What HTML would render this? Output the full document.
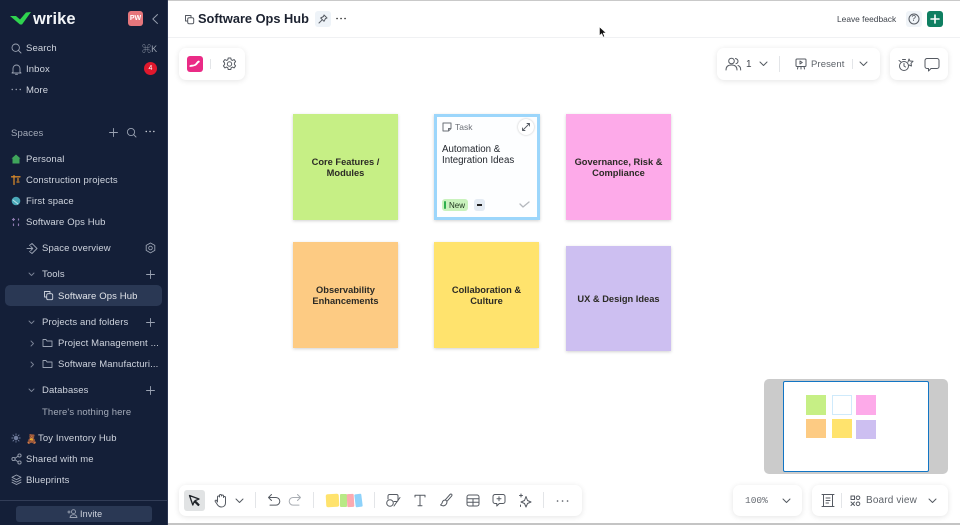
<!DOCTYPE html>
<html><head><meta charset="utf-8"><style>
html{background:#fff}
html,body{margin:0;padding:0;width:960px;height:525px;overflow:hidden;font-family:"Liberation Sans","Noto Sans CJK SC",sans-serif}
body{background:#fff;filter:blur(.3px)}
.a{position:absolute}
.t{position:absolute;white-space:nowrap;line-height:14px}
#side{position:absolute;left:0;top:0;width:168px;height:525px;background:#141f38}
#side .t{color:#cfd4de;font-size:9.5px;letter-spacing:.12px;transform:translateY(1px)}
#side svg,.ic{position:absolute;fill:none;stroke-linecap:round;stroke-linejoin:round}
#side svg{stroke:#9aa2b2;stroke-width:.9}
#side svg.ch{stroke:#7a8396}
.ic{stroke:#555a62;stroke-width:1}
.card{position:absolute;background:#fff;border-radius:7px;box-shadow:0 1px 6px rgba(0,0,0,.11)}
.note{position:absolute;box-shadow:0 1px 3px rgba(0,0,0,.18);display:flex;align-items:center;justify-content:center;text-align:center;font-weight:700;font-size:9.3px;line-height:11.5px;color:#2b2a25;width:105px;height:105px;box-sizing:border-box;padding-top:2px}
.dv{position:absolute;width:1px;background:#e3e5e8}
</style></head><body>
<div class="a" style="left:0;top:0;width:960px;height:1px;background:#c9c9c9"></div>
<div class="a" style="left:0;top:523px;width:960px;height:2px;background:#c4c4c4"></div>
<div class="a" style="left:168px;top:37px;width:792px;height:1px;background:#f0f1f3"></div>

<div id="side">
<svg style="left:10px;top:11px;stroke:none" width="22" height="14" viewBox="0 0 22 14"><path style="fill:#2fd34f;stroke:none" d="M0 5h6l4 3.500 6-7 5-.5-9 12.500h-2z"/></svg>
<div class="t" style="left:33px;top:9px;font-size:16.500px;font-weight:700;color:#f2f4f7;letter-spacing:.1px;line-height:18px">wrike</div>
<div class="a" style="left:128px;top:11px;width:15px;height:15px;background:#e5767c;border-radius:3px;color:#fff;font-size:7px;font-weight:700;text-align:center;line-height:15px">PW</div>
<svg style="left:151px;top:13px" width="8" height="12"><path d="M6.500 1.500 1.800 6l4.700 4.500"/></svg>

<svg style="left:11px;top:43px" width="11" height="11"><circle cx="4.700" cy="4.700" r="3.700"/><path d="M7.500 7.500 10 10"/></svg>
<div class="t" style="left:26px;top:41px">Search</div>
<div class="t" style="left:142px;top:41px;color:#9aa2b1;font-size:9px">⌘K</div>
<svg style="left:11px;top:64px" width="11" height="11"><path d="M2 8V4.500a3.500 3.500 0 0 1 7 0V8l1 1H1zM4.500 10.300h2"/></svg>
<div class="t" style="left:26px;top:62px">Inbox</div>
<div class="a" style="left:144px;top:62px;width:13px;height:13px;border-radius:50%;background:#e0182d;color:#fff;font-size:7px;line-height:13px;text-align:center">4</div>
<svg style="left:11px;top:88px;stroke-width:1.400" width="11" height="4"><path d="M1.200 1.500h.1M5.200 1.500h.1M9.200 1.500h.1"/></svg>
<div class="t" style="left:26px;top:83px">More</div>

<div class="t" style="left:11px;top:126px;color:#a4abb9">Spaces</div>
<svg style="left:108px;top:127px" width="11" height="11"><path d="M5.500 1.500v8M1.500 5.500h8"/></svg>
<svg style="left:126px;top:127px" width="11" height="11"><circle cx="5" cy="5" r="3.600"/><path d="M7.700 7.700 10 10"/></svg>
<svg style="left:145px;top:130px;stroke-width:1.400;stroke:#d5d9e0" width="11" height="4"><path d="M1.200 1.500h.1M5 1.500h.1M8.800 1.500h.1"/></svg>

<svg style="left:11px;top:154px;stroke:none" width="10" height="10"><path style="fill:#3fa55b;stroke:none" d="M5 .5 9.500 4.500H8.500V9.500h-7V4.500H.5z"/></svg>
<div class="t" style="left:26px;top:152px">Personal</div>
<svg style="left:11px;top:175px;stroke:#d4862a;stroke-width:1.300" width="10" height="10"><path d="M3 .5v9M.5 1.800h8.500M7 3.500v2M6 7h2"/></svg>
<div class="t" style="left:26px;top:173px">Construction projects</div>
<svg style="left:11px;top:196px;stroke:none" width="10" height="10"><circle cx="5" cy="5" r="4.300" style="fill:#4aa8b8;stroke:none"/><path d="M2 4l5 4" style="stroke:#bfe3e8"/></svg>
<div class="t" style="left:26px;top:194px">First space</div>
<svg style="left:11px;top:217px;stroke:#8d7ab0;stroke-width:1.200" width="10" height="10"><path d="M2.500 1.500v2M1.500 2.500h2M7.500 2v1M7.500 7v1.500M2.500 7v1.500"/></svg>
<div class="t" style="left:26px;top:215px">Software Ops Hub</div>

<svg style="left:26px;top:243px" width="12" height="11"><path d="M1 5.500h5.500M4.800 3.500l2 2-2 2M3.500 2.500l2.500-2 5 5-5 5-2.500-2"/></svg>
<div class="t" style="left:42px;top:241px">Space overview</div>
<svg style="left:145px;top:242px" width="11" height="12"><path d="M5.500 1 9.800 3.400v5L5.500 10.900 1.200 8.400v-5z"/><circle cx="5.500" cy="6" r="1.800"/></svg>

<svg class="ch" style="left:28px;top:272px" width="7" height="5"><path d="M1 1 3.500 3.500 6 1"/></svg>
<div class="t" style="left:42px;top:267px">Tools</div>
<svg style="left:145px;top:269px" width="11" height="11"><path d="M5.500 1.500v8M1.500 5.500h8"/></svg>
<div class="a" style="left:5px;top:285px;width:157px;height:21px;background:#2a3854;border-radius:5px"></div>
<svg style="left:43px;top:290px;stroke:#cfd4de" width="11" height="11"><path d="M3.500 7H1.500V1.500H7V3.500"/><rect x="3.700" y="3.700" width="6" height="6" rx="1.500"/></svg>
<div class="t" style="left:58px;top:289px;color:#e2e5ea">Software Ops Hub</div>

<svg class="ch" style="left:28px;top:320px" width="7" height="5"><path d="M1 1 3.500 3.500 6 1"/></svg>
<div class="t" style="left:42px;top:315px">Projects and folders</div>
<svg style="left:145px;top:317px" width="11" height="11"><path d="M5.500 1.500v8M1.500 5.500h8"/></svg>
<svg class="ch" style="left:30px;top:340px" width="5" height="7"><path d="M1 1 3.500 3.500 1 6"/></svg>
<svg style="left:42px;top:338px" width="11" height="10"><path d="M1 2v6.500h9V3H5L4 1.500H1z"/></svg>
<div class="t" style="left:58px;top:336px">Project Management ...</div>
<svg class="ch" style="left:30px;top:361px" width="5" height="7"><path d="M1 1 3.500 3.500 1 6"/></svg>
<svg style="left:42px;top:359px" width="11" height="10"><path d="M1 2v6.500h9V3H5L4 1.500H1z"/></svg>
<div class="t" style="left:58px;top:357px">Software Manufacturi...</div>

<svg class="ch" style="left:28px;top:388px" width="7" height="5"><path d="M1 1 3.500 3.500 6 1"/></svg>
<div class="t" style="left:42px;top:383px">Databases</div>
<svg style="left:145px;top:385px" width="11" height="11"><path d="M5.500 1.500v8M1.500 5.500h8"/></svg>
<div class="t" style="left:42px;top:405px;color:#a4abb9">There's nothing here</div>

<svg style="left:11px;top:433px;stroke:#6f7c9c" width="10" height="10"><circle cx="5" cy="5" r="1.800" style="fill:#6f7c9c"/><path d="M5 .8v1M5 8.200v1M.8 5h1M8.200 5h1M2 2l.7.700M7.300 7.300l.7.700M2 8l.7-.7M7.300 2.700 8 2"/></svg>
<div class="t" style="left:26px;top:431px;font-size:9px;line-height:14px">🧸</div>
<div class="t" style="left:38px;top:431px">Toy Inventory Hub</div>
<svg style="left:11px;top:453px" width="11" height="12"><circle cx="2.500" cy="6" r="1.600"/><circle cx="8.500" cy="2.500" r="1.600"/><circle cx="8.500" cy="9.500" r="1.600"/><path d="M4 5.200 7 3.300M4 6.800l3 1.900"/></svg>
<div class="t" style="left:26px;top:452px">Shared with me</div>
<svg style="left:11px;top:474px" width="11" height="12"><path d="M5.500 1 10 3.300 5.500 5.600 1 3.300zM1 5.800l4.500 2.300L10 5.800M1 8.200l4.500 2.300L10 8.200"/></svg>
<div class="t" style="left:26px;top:473px">Blueprints</div>
<div class="a" style="left:0;top:500px;width:168px;height:1px;background:#323d57"></div>
<div class="a" style="left:16px;top:506px;width:136px;height:16px;background:#2a3854;border-radius:3px"></div>
<svg style="left:67px;top:508px" width="11" height="11"><circle cx="6.500" cy="3.700" r="2"/><path d="M3 9.500c.4-2 1.700-2.800 3.500-2.800s3.100.8 3.500 2.800zM.8 4h2.400M2 2.800v2.400"/></svg>
<div class="t" style="left:80px;top:506px;font-size:9px">Invite</div>
</div>
<div class="a" style="left:167px;top:0;width:1px;height:525px;background:#2a3450"></div>

<!-- header -->
<svg class="ic" style="left:184px;top:14px" width="11" height="11"><path d="M3.500 7H1.500V1.500H7V3.500"/><rect x="3.700" y="3.700" width="6" height="6" rx="1.500"/></svg>
<div class="t" style="left:198px;top:11px;font-size:12.800px;font-weight:700;color:#1c2230;line-height:16px">Software Ops Hub</div>
<div class="a" style="left:315px;top:11px;width:16px;height:16px;background:#eef3f8;border-radius:3px"></div>
<svg class="ic" style="left:318px;top:14px" width="10" height="10"><path d="M1 9 3.700 6.300M6 1 9 4 7.500 4.500 6 7.300 2.700 4 5.500 2.500z"/></svg>
<svg class="ic" style="left:336px;top:17px;stroke-width:1.500;stroke:#222" width="10" height="4"><path d="M1 1.500h.1M5 1.500h.1M9 1.500h.1"/></svg>
<div class="t" style="left:837px;top:12px;font-size:8.400px;color:#3f444c">Leave feedback</div>
<div class="a" style="left:906px;top:11px;width:16px;height:16px;background:#f0f4f8;border-radius:3px"></div>
<svg class="ic" style="left:908px;top:13px" width="12" height="12"><circle cx="6" cy="6" r="5"/></svg>
<div class="t" style="left:911.500px;top:12px;font-size:8px;color:#3f444c">?</div>
<div class="a" style="left:927px;top:11px;width:16px;height:16px;background:#0f7f61;border-radius:3px"></div>
<svg class="ic" style="left:930px;top:14px;stroke:#fff;stroke-width:1.600" width="10" height="10"><path d="M5 1v8M1 5h8"/></svg>

<!-- cursor -->
<svg class="a" style="left:598px;top:26px" width="10" height="13"><path d="M1.500 1v8.500l2.200-2 1.500 3.500 1.300-.6L5.100 7H8z" fill="#111" stroke="#fff" stroke-width=".5"/></svg>

<!-- top-left card -->
<div class="card" style="left:179px;top:48px;width:66px;height:32px"></div>
<div class="a" style="left:187px;top:56px;width:16px;height:16px;background:#ea2b86;border-radius:3px"></div>
<svg class="a" style="left:188px;top:58px" width="14" height="12"><path d="M1.500 7.500c2-1.500 4 0 5.500-1.500s2-3 4-3.500l1 1.500c-2 .5-2.500 3-4.500 3.700S3.500 9 1.500 8.800z" fill="#fff"/></svg>
<div class="dv" style="left:210px;top:59px;height:10px"></div>
<svg class="ic" style="left:222px;top:57px" width="15" height="15"><path d="M6.200 1h2.600l.4 1.800 1.300.6 1.600-.9 1.500 2.100-1.200 1.400v1.500l1.200 1.300-1.500 2.100-1.600-.8-1.300.7-.4 1.700H6.200l-.4-1.700-1.300-.7-1.600.8-1.500-2.100 1.200-1.300V6L1.400 4.600l1.500-2.100 1.600.9 1.300-.6z"/><circle cx="7.500" cy="7" r="2.200"/></svg>

<!-- top-right cards -->
<div class="card" style="left:717px;top:48px;width:163px;height:32px"></div>
<svg class="ic" style="left:725px;top:57px" width="17" height="14"><circle cx="6.500" cy="4" r="2.800"/><path d="M1 13c0-3.500 2.300-5 5.500-5s5.500 1.500 5.500 5M10.500 1.500c1.700.5 2.500 1.500 2.500 2.700s-.7 2-2 2.500M13 8.500c1.800.6 2.700 2 2.700 4.500"/></svg>
<div class="t" style="left:746px;top:58px;font-size:10px;color:#3f444c">1</div>
<svg class="ic" style="left:759px;top:61px" width="9" height="6"><path d="M1 1 4.500 4.500 8 1"/></svg>
<div class="dv" style="left:779px;top:56px;height:16px"></div>
<svg class="ic" style="left:795px;top:58px" width="12" height="13"><rect x="1" y="1" width="10" height="7.500" rx="1"/><path d="M5 3v3l2.300-1.500zM3 8.500 2.500 11M9 8.500l.5 2.500M6 8.500V11"/></svg>
<div class="t" style="left:811px;top:58px;font-size:9.500px;color:#5d6269;letter-spacing:.1px">Present</div>
<div class="dv" style="left:852px;top:59px;height:10px"></div>
<svg class="ic" style="left:859px;top:61px" width="9" height="6"><path d="M1 1 4.500 4.500 8 1"/></svg>
<div class="card" style="left:890px;top:48px;width:58px;height:32px"></div>
<svg class="ic" style="left:897px;top:57px" width="17" height="15"><circle cx="7" cy="9" r="4.500"/><path d="M7 6.500V9l1.500 1M2 3.500l2 1.500M5.500 2.500h3M11 5l1-3 1 2 3 .3-2 2 .5 2.700-2.500-1"/></svg>
<svg class="ic" style="left:924px;top:57px" width="16" height="15"><path d="M3 1.500h10a2 2 0 0 1 2 2v6a2 2 0 0 1-2 2H7l-2.500 2.500v-2.500H3a2 2 0 0 1-2-2v-6a2 2 0 0 1 2-2z"/></svg>

<!-- notes -->
<div class="note" style="left:293px;top:114px;background:#c6ef85;height:106px">Core Features /<br>Modules</div>
<div class="a" style="left:434px;top:114px;width:106px;height:106px;box-sizing:border-box;background:#fdfeff;border:3px solid #9cd6fb;box-shadow:0 1px 3px rgba(0,0,0,.18)"></div>
<svg class="ic" style="left:442px;top:122px;stroke:#6c7077" width="10" height="10"><path d="M1 1h8v5.500L6.500 9H1zM6.500 9V6.500H9"/></svg>
<div class="t" style="left:455px;top:120px;font-size:8.500px;color:#6c7077">Task</div>
<div class="a" style="left:518px;top:119px;width:16px;height:16px;background:#fff;border-radius:50%;box-shadow:0 0 2px rgba(0,0,0,.25)"></div>
<svg class="ic" style="left:521px;top:122px;stroke-width:.9" width="10" height="10"><path d="M1.500 8.500l7-7M6 1.500h2.500V4M1.500 6v2.500H4"/></svg>
<div class="t" style="left:442px;top:144px;font-size:9.700px;line-height:11px;color:#23272e;white-space:normal;width:90px">Automation &amp;<br>Integration Ideas</div>
<div class="a" style="left:442px;top:199px;width:26px;height:12px;background:#c9f2bd;border-radius:3px"></div>
<div class="a" style="left:444px;top:201px;width:2px;height:8px;background:#2fae4e;border-radius:1px"></div>
<div class="t" style="left:449px;top:199px;font-size:8px;color:#20351f">New</div>
<div class="a" style="left:474px;top:199px;width:11px;height:12px;background:#e4ebf3;border-radius:3px"></div>
<div class="a" style="left:477px;top:204px;width:5px;height:1.500px;background:#222"></div>
<svg class="ic" style="left:519px;top:200px;stroke:#b4b8bd;stroke-width:1.300" width="12" height="9"><path d="M1 4l3 3 6-5"/></svg>
<div class="note" style="left:566px;top:114px;background:#fdaae9;width:105px;height:106px">Governance, Risk &amp;<br>Compliance</div>
<div class="note" style="left:293px;top:242px;background:#fdcb83;height:106px">Observability<br>Enhancements</div>
<div class="note" style="left:434px;top:242px;background:#ffe36d;width:105px;height:106px">Collaboration &amp;<br>Culture</div>
<div class="note" style="left:566px;top:246px;background:#cdbff1;height:105px">UX &amp; Design Ideas</div>

<!-- minimap -->
<div class="a" style="left:764px;top:379px;width:184px;height:95px;background:#cbcbcb;border-radius:5px"></div>
<div class="a" style="left:783px;top:381px;width:146px;height:91px;box-sizing:border-box;background:#fff;border:1.500px solid #1275c4;border-radius:2px"></div>
<div class="a" style="left:806px;top:395px;width:20px;height:20px;background:#c6ef85"></div>
<div class="a" style="left:832px;top:395px;width:20px;height:20px;box-sizing:border-box;background:#fff;border:1px solid #cfeafb"></div>
<div class="a" style="left:856px;top:395px;width:20px;height:20px;background:#fdaae9"></div>
<div class="a" style="left:806px;top:419px;width:20px;height:19px;background:#fdcb83"></div>
<div class="a" style="left:832px;top:419px;width:20px;height:19px;background:#ffe36d"></div>
<div class="a" style="left:856px;top:420px;width:20px;height:19px;background:#cdbff1"></div>

<!-- bottom toolbar -->
<div class="card" style="left:179px;top:485px;width:403px;height:31px"></div>
<div class="a" style="left:184px;top:490px;width:21px;height:21px;background:#e1e3e4;border-radius:3px"></div>
<svg class="ic" style="left:188px;top:494px;stroke:#1f2328;stroke-width:1.300" width="13" height="13"><path d="M1.500 1.500 11 5 7 6.700l4 4-.7.700-4-4L4.800 11z"/></svg>
<svg class="ic" style="left:214px;top:493px" width="14" height="15"><path d="M3.500 9V4a1 1 0 0 1 2 0V2.500a1 1 0 0 1 2 0V3a1 1 0 0 1 2 0v1.500a1 1 0 0 1 2 0V10c0 2.500-1.800 4-4 4-2.500 0-3.500-1-4.500-3L1.200 8.500c-.5-1 .8-1.800 1.500-1z"/></svg>
<svg class="ic" style="left:235px;top:498px" width="9" height="6"><path d="M1 1 4.500 4.500 8 1"/></svg>
<div class="dv" style="left:255px;top:492px;height:16px"></div>
<svg class="ic" style="left:267px;top:493px" width="14" height="14"><path d="M4.500 1.500 1.500 4.500 4.500 7.500M1.500 4.500H9a3.800 3.800 0 0 1 0 7.600H3"/></svg>
<svg class="ic" style="left:288px;top:493px;stroke:#a9adb3" width="14" height="14"><path d="M9.500 1.500 12.500 4.500 9.500 7.500M12.500 4.500H5a3.800 3.800 0 0 0 0 7.600H11"/></svg>
<div class="dv" style="left:313px;top:492px;height:16px"></div>
<div class="a" style="left:326px;top:494px;width:13px;height:13px;background:#ffe36d;border-radius:2px;transform:rotate(-3deg)"></div>
<div class="a" style="left:340px;top:494px;width:7px;height:13px;background:#b8e986;border-radius:1px"></div>
<div class="a" style="left:347px;top:494px;width:7px;height:13px;background:#fbaab0;border-radius:1px;transform:rotate(-3deg)"></div>
<div class="a" style="left:355px;top:494px;width:7px;height:13px;background:#8ed2fa;border-radius:1px;transform:rotate(-7deg)"></div>
<div class="dv" style="left:374px;top:492px;height:16px"></div>
<svg class="ic" style="left:385px;top:493px" width="17" height="15"><path d="M3 6V3a1.500 1.500 0 0 1 1.500-1.500h7A1.500 1.500 0 0 1 13 3v4a1.500 1.500 0 0 1-1.500 1.500H9M15 4.500 9 13"/><circle cx="5" cy="10" r="3.300"/></svg>
<svg class="ic" style="left:414px;top:494px" width="12" height="13"><path d="M1 3V1.200h10V3M6 1.200v10.600M4 11.800h4"/></svg>
<svg class="ic" style="left:439px;top:493px" width="14" height="15"><path d="M12.500 1.200c.8.500.6 1.200 0 2L8 8.300 6.300 6.800 11 1.500c.5-.5 1-.6 1.500-.3zM6.200 7c-2 .2-2.700 1.200-3 2.700-.2 1-.7 1.700-1.700 2.300 2.500 1.500 5 .8 6-1.200.4-.8.500-1.500.4-2.300"/></svg>
<svg class="ic" style="left:466px;top:494px" width="14" height="13"><rect x="1" y="1" width="12" height="11" rx="2"/><path d="M1 4.700h12M1 8.300h12M7 4.700V12"/></svg>
<svg class="ic" style="left:492px;top:493px" width="14" height="15"><path d="M3 1.500h8a2 2 0 0 1 2 2v5a2 2 0 0 1-2 2H7.300L4.800 13v-2.500H3a2 2 0 0 1-2-2v-5a2 2 0 0 1 2-2zM7 3.800v4M5 5.800h4"/></svg>
<svg class="ic" style="left:518px;top:493px" width="14" height="15"><path d="M8 3.500 9.500 7.500 13 9 9.500 10.500 8 14 6.500 10.500 3 9 6.500 7.500zM3 1v3M1.500 2.500h3M2.500 12v1.500"/></svg>
<div class="dv" style="left:543px;top:492px;height:16px"></div>
<svg class="ic" style="left:556px;top:499px;stroke-width:1.600" width="13" height="4"><path d="M1.500 2h.1M6.500 2h.1M11.500 2h.1"/></svg>

<div class="card" style="left:733px;top:485px;width:69px;height:31px"></div>
<div class="t" style="left:745px;top:494px;font-family:'Liberation Mono',monospace;font-size:9.500px;color:#666b72">100%</div>
<svg class="ic" style="left:782px;top:498px" width="9" height="6"><path d="M1 1 4.500 4.500 8 1"/></svg>
<div class="card" style="left:812px;top:485px;width:136px;height:31px"></div>
<svg class="ic" style="left:821px;top:493px" width="14" height="15"><path d="M2.500 1.500h9M2.500 13.500h9M2.500 1.500v12M11.500 1.500v12M5 5h4M5 7.500h4M5 10h2.500M1 1.500h1M12 1.500h1M1 13.500h1M12 13.500h1"/></svg>
<div class="dv" style="left:841px;top:493px;height:15px"></div>
<svg class="ic" style="left:850px;top:495px" width="11" height="12"><rect x="1" y="1" width="3.500" height="3.500"/><circle cx="8" cy="2.800" r="1.800"/><circle cx="8" cy="8.800" r="1.800"/><path d="M1 7l3.500 3.500M4.500 7 1 10.500"/></svg>
<div class="t" style="left:866px;top:494px;font-size:10px;color:#5d6269;letter-spacing:.15px">Board view</div>
<svg class="ic" style="left:928px;top:498px" width="9" height="6"><path d="M1 1 4.500 4.500 8 1"/></svg>
</body></html>
